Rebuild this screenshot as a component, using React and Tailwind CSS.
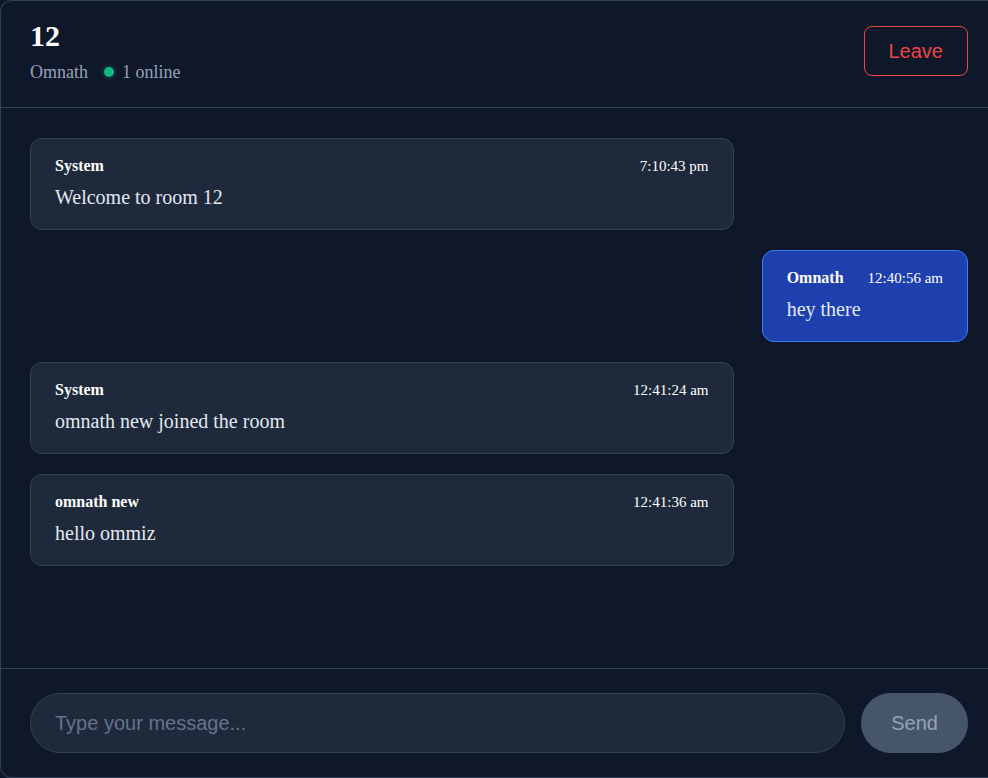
import React from "react";

const serif = { fontFamily: '"Liberation Serif", "Times New Roman", serif' };

function Bubble({ name, time, text, own }) {
  return (
    <div className={own ? "flex justify-end" : "flex justify-start"}>
      <div
        className={
          own
            ? "max-w-[75%] rounded-xl border border-[#3b82f6] bg-[#1e40af] px-6 pb-[18px] pt-4"
            : "w-3/4 rounded-xl border border-[#334155] bg-[#1e293b] px-6 pb-[18px] pt-4"
        }
      >
        <div className="mb-1.5 flex h-[22px] items-center justify-between gap-6 text-white">
          <span className="text-base font-bold leading-[22px]">{name}</span>
          <span className="text-[15px] leading-[22px]">{time}</span>
        </div>
        <div className="text-xl leading-7 text-[#e2e8f0]">{text}</div>
      </div>
    </div>
  );
}

export default function App() {
  return (
    <div className="h-screen w-full overflow-hidden bg-[#0f172a]" style={serif}>
      <div className="flex h-full flex-col rounded-l-xl border-y border-l border-[#334155] bg-[#0f172a]">
        <header className="flex items-center justify-between border-b border-[#334155] pb-[23px] pl-[29px] pr-5 pt-[17px]">
          <div className="flex flex-col">
            <h1 className="text-3xl font-bold leading-9 text-white">12</h1>
            <div className="mt-1.5 flex items-center gap-4 text-lg leading-6 text-[#94a3b8]">
              <span>Omnath</span>
              <span className="flex items-center gap-2">
                <span className="h-2.5 w-2.5 rounded-full bg-[#10b981] ring-[3px] ring-[#10b981]/10"></span>
                <span>1 online</span>
              </span>
            </div>
          </div>
          <button
            className="rounded-lg border border-[#ef4444] px-6 py-2.5 text-xl leading-7 text-[#ef4444]"
            style={{ fontFamily: '"Liberation Sans", Arial, sans-serif' }}
          >
            Leave
          </button>
        </header>

        <div className="flex flex-1 flex-col gap-5 overflow-y-auto pb-6 pl-[29px] pr-5 pt-[30px]">
          <Bubble name="System" time="7:10:43 pm" text="Welcome to room 12" />
          <Bubble name="Omnath" time="12:40:56 am" text="hey there" own />
          <Bubble name="System" time="12:41:24 am" text="omnath new joined the room" />
          <Bubble name="omnath new" time="12:41:36 am" text="hello ommiz" />
        </div>

        <div
          className="flex items-center gap-4 border-t border-[#334155] pb-6 pl-[29px] pr-5 pt-6"
          style={{ fontFamily: '"Liberation Sans", Arial, sans-serif' }}
        >
          <input
            type="text"
            placeholder="Type your message..."
            className="h-[60px] flex-1 rounded-full border border-[#334155] bg-[#1e293b] px-6 text-xl text-[#e2e8f0] outline-none placeholder:text-[#64748b]"
          />
          <button className="h-[60px] rounded-full bg-[#475569] px-[30px] text-xl leading-7 text-[#94a3b8]">
            Send
          </button>
        </div>
      </div>
    </div>
  );
}
